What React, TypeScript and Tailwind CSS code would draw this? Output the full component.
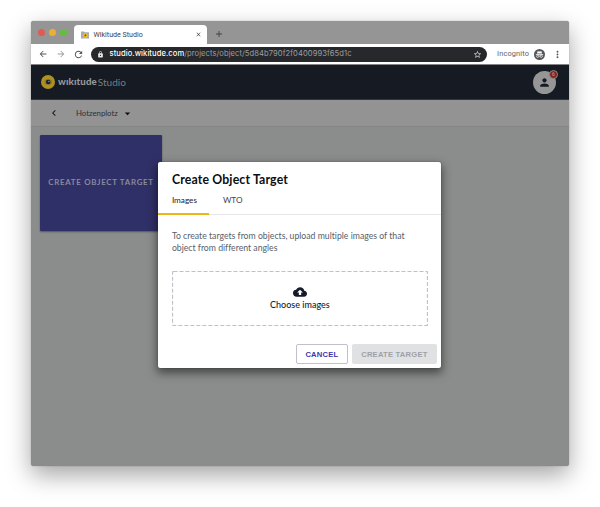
import React from "react";
import { MdArrowBack, MdArrowForward, MdRefresh, MdLock, MdStarBorder, MdMoreVert, MdPerson, MdCloudUpload, MdChevronLeft, MdArrowDropDown, MdClose, MdAdd } from "react-icons/md";

function TabStrip() {
  return (
    <div className="flex h-[23px] items-end rounded-t-[3px] bg-[#959595]">
      <div className="mr-[7px] ml-[7px] flex h-[23px] items-center gap-[4px]">
        <i className="size-[7px] rounded-full bg-[#e25b53]" />
        <i className="size-[7px] rounded-full bg-[#e9b035]" />
        <i className="size-[7px] rounded-full bg-[#62bf3e]" />
      </div>
      <div className="flex h-[19px] w-[133px] items-center rounded-t-[4px] bg-white pr-[5px] pl-[7px]">
        <svg width="8" height="8" viewBox="0 0 8 8">
          <path d="M0 .5h3l1 .8h4v6.2H0z" fill="#a9abb2" />
          <circle cx="4.3" cy="4.5" r="2.5" fill="#e7bd1c" />
          <circle cx="4.4" cy="4.4" r=".8" fill="#444" />
        </svg>
        <span className="ml-[4.5px] flex-1 font-['Roboto'] text-[7.1px] leading-none whitespace-nowrap text-[#3f4144]">Wikitude Studio</span>
        <MdClose className="size-[7px] text-[#45484c]" />
      </div>
      <MdAdd className="mb-[5px] ml-[7px] size-[10px] text-[#3f4042]" />
    </div>
  );
}

function Toolbar() {
  return (
    <div className="flex h-[21px] items-center border-b border-[#858585] bg-white pl-[7px] text-[#54575b]">
      <MdArrowBack className="size-[10px]" />
      <MdArrowForward className="ml-[8px] size-[10px] text-[#999b9e]" />
      <MdRefresh className="ml-[7px] size-[11px]" />
      <div className="ml-[7px] flex h-[15px] w-[396px] items-center rounded-full bg-[#26282b] pr-[5px] pl-[6px]">
        <MdLock className="size-[7px] text-[#e8e8e8]" />
        <span className="ml-[5.5px] flex-1 text-[7.58px] leading-none tracking-[.01em] whitespace-nowrap text-[#9b9fa4]">
          <span className="font-medium text-white">studio.wikitude.com</span>/projects/object/5d84b790f2f0400993f65d1c
        </span>
        <MdStarBorder className="size-[9px] text-[#dcdde0]" />
      </div>
      <span className="ml-[10px] font-['Roboto'] text-[7.4px] tracking-[.02em] whitespace-nowrap text-[#606266]">Incognito</span>
      <svg className="ml-auto shrink-0" width="11" height="11" viewBox="0 0 11 11">
        <circle cx="5.5" cy="5.5" r="5.5" fill="#54565a" />
        <path d="M3.6 2.2 5.5 2.6l1.9-.4.7 2.4H2.9zM1.8 5h7.4v.7H1.8z" fill="#fff" />
        <circle cx="3.7" cy="7.3" r="1.1" fill="none" stroke="#fff" strokeWidth=".7" />
        <circle cx="7.3" cy="7.3" r="1.1" fill="none" stroke="#fff" strokeWidth=".7" />
        <path d="M4.8 7h1.4" stroke="#fff" strokeWidth=".6" />
      </svg>
      <MdMoreVert className="mr-[6px] ml-[7px] size-[11px]" />
    </div>
  );
}

function Header() {
  return (
    <div className="flex h-[35px] items-center justify-between border-b border-[#303641] bg-[#151a23] pr-[13px] pl-[10px]">
      <div className="flex items-center">
        <svg width="14" height="14" viewBox="0 0 14 14">
          <circle cx="7" cy="7" r="7" fill="#ad921f" />
          <ellipse cx="7.2" cy="7" rx="4" ry="3" fill="#8b7b35" />
          <circle cx="7.2" cy="7" r="2.3" fill="#1b202c" />
          <circle cx="7.9" cy="6.4" r=".7" fill="#9a9b9d" />
        </svg>
        <span className="ml-[3px] font-['Lato'] text-[9.7px] leading-none font-black tracking-[.01em] whitespace-nowrap text-[#969798]">wıkıtude</span>
        <span className="ml-[1px] font-['Lato'] text-[10px] leading-none whitespace-nowrap text-[#7b7d80]">Studio</span>
      </div>
      <div className="relative flex size-[23px] items-center justify-center rounded-full bg-[#969696] text-[#151a23]">
        <MdPerson className="size-[13px]" />
        <span className="absolute -top-[1px] -right-[2px] flex size-[9px] items-center justify-center rounded-full border border-[#8b8587] bg-[#85211f] font-['Roboto'] text-[5px] leading-none text-[#c5acac]">6</span>
      </div>
    </div>
  );
}

function Breadcrumb() {
  return (
    <div className="flex h-[27px] items-center border-b border-[#838583] bg-[#939393] pl-[17px] font-['Lato'] text-[#2d3037]">
      <MdChevronLeft className="size-[12px] text-[#151a23]" />
      <span className="ml-[16px] w-[43px] pt-px text-[7.8px] leading-none whitespace-nowrap">Hotzenplotz</span>
      <MdArrowDropDown className="ml-[2px] size-[13px] text-[#111]" />
    </div>
  );
}

function Dialog() {
  return (
    <div className="absolute top-[162px] left-[158.4px] flex h-[206px] w-[283px] flex-col rounded-[2px] bg-white font-['Lato'] shadow-[0_4px_10px_1px_rgba(0,0,0,0.5),0_0_1px_#333] [font-variant-ligatures:none]">
      <h1 className="mt-[10px] ml-[13.5px] text-[12.3px] leading-[15px] font-bold tracking-[.012em] whitespace-nowrap text-[#0b0e14]">Create Object Target</h1>
      <div className="flex h-[28px] border-b border-[#e5e5e7] text-[8.2px] leading-[27px] text-[#3d424d]">
        <div className="h-[28px] w-[51px] border-b-2 border-[#eeb517] pl-[13.5px] text-[#1b2130]">Images</div>
        <div className="w-[51px] pl-[13.5px]">WTO</div>
      </div>
      <p className="mt-[15px] ml-[13.5px] text-[8.7px] leading-[12px] whitespace-nowrap text-[#585e69]">
        To create targets from objects, upload multiple images of that<br />object from different angles
      </p>
      <div className="relative mx-[13.5px] mt-[17px] flex h-[55px] shrink-0 flex-col items-center pt-[14px] text-[#151b2b]">
        <svg className="absolute inset-0" width="256" height="55">
          <rect x=".5" y=".5" width="255" height="54" rx="1" fill="none" stroke="#c0c1c6" strokeWidth="1.2" strokeDasharray="4 2" />
        </svg>
        <MdCloudUpload className="size-[14px]" />
        <span className="text-[9px] leading-[11px] font-medium whitespace-nowrap">Choose images</span>
      </div>
      <div className="mt-[18px] mr-[4.5px] flex justify-end gap-[4px] font-['Liberation_Sans'] text-[7.6px] leading-none font-bold tracking-[.03em]">
        <button className="h-[20px] w-[52px] rounded-[2px] border border-[#bfc0ca] pt-px text-[#3c36ad]">CANCEL</button>
        <button className="h-[20px] w-[85px] rounded-[2px] bg-[#e0e1e3] pt-px whitespace-nowrap text-[#9ea0a8]">CREATE TARGET</button>
      </div>
    </div>
  );
}

export default function App() {
  return (
    <div className="relative h-[507px] w-[600px] overflow-hidden bg-white pt-[21px] pl-[31px] font-['Inter','Liberation_Sans',sans-serif]">
      <div className="flex h-[445px] w-[538px] flex-col rounded-[3px] bg-[#8a8d8b] shadow-[0_9px_24px_rgba(0,0,0,0.36),0_0_1px_#777]">
        <TabStrip />
        <Toolbar />
        <Header />
        <Breadcrumb />
        <main className="px-[9px] pt-[8px]">
          <div className="flex h-[96px] w-[122px] items-center justify-center rounded-[1px] bg-[#303068] font-['Lato'] text-[7.9px] leading-none font-bold tracking-[.09em] whitespace-nowrap text-[#8a8a9b] shadow-[0_1px_2px_rgba(0,0,0,0.4)]">
            CREATE OBJECT TARGET
          </div>
        </main>
      </div>
      <Dialog />
    </div>
  );
}
